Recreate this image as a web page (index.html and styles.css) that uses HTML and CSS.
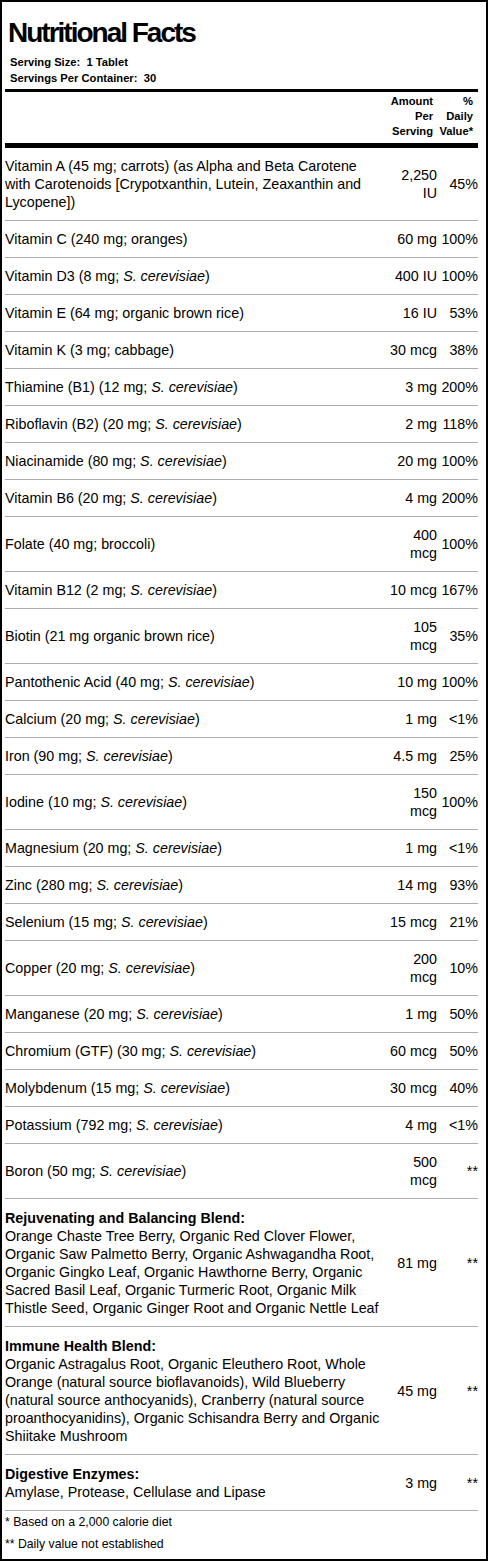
FILE: index.html
```html
<!DOCTYPE html>
<html lang="en">
<head>
<meta charset="utf-8">
<title>Nutritional Facts</title>
<link rel="stylesheet" href="styles.css">
</head>
<body>
<div class="label">
  <h1 class="title">Nutritional Facts</h1>
  <div class="serving">
    <div>Serving Size:&nbsp; 1 Tablet</div>
    <div>Servings Per Container:&nbsp; 30</div>
  </div>
  <div class="rule-thin"></div>
  <div class="colhead">
    <div></div>
    <div class="ch-amt">Amount<br>Per<br>Serving</div>
    <div class="ch-dv">%<br>Daily<br>Value*</div>
  </div>
  <div class="rule-thick"></div>

  <div class="row"><div class="desc">Vitamin A (45 mg; carrots) (as Alpha and Beta Carotene with Carotenoids [Crypotxanthin, Lutein, Zeaxanthin and Lycopene])</div><div class="amt">2,250 IU</div><div class="dv">45%</div></div>
  <div class="row"><div class="desc">Vitamin C (240 mg; oranges)</div><div class="amt">60 mg</div><div class="dv">100%</div></div>
  <div class="row"><div class="desc">Vitamin D3 (8 mg; <i>S. cerevisiae</i>)</div><div class="amt">400 IU</div><div class="dv">100%</div></div>
  <div class="row"><div class="desc">Vitamin E (64 mg; organic brown rice)</div><div class="amt">16 IU</div><div class="dv">53%</div></div>
  <div class="row"><div class="desc">Vitamin K (3 mg; cabbage)</div><div class="amt">30 mcg</div><div class="dv">38%</div></div>
  <div class="row"><div class="desc">Thiamine (B1) (12 mg; <i>S. cerevisiae</i>)</div><div class="amt">3 mg</div><div class="dv">200%</div></div>
  <div class="row"><div class="desc">Riboflavin (B2) (20 mg; <i>S. cerevisiae</i>)</div><div class="amt">2 mg</div><div class="dv">118%</div></div>
  <div class="row"><div class="desc">Niacinamide (80 mg; <i>S. cerevisiae</i>)</div><div class="amt">20 mg</div><div class="dv">100%</div></div>
  <div class="row"><div class="desc">Vitamin B6 (20 mg; <i>S. cerevisiae</i>)</div><div class="amt">4 mg</div><div class="dv">200%</div></div>
  <div class="row"><div class="desc">Folate (40 mg; broccoli)</div><div class="amt">400 mcg</div><div class="dv">100%</div></div>
  <div class="row"><div class="desc">Vitamin B12 (2 mg; <i>S. cerevisiae</i>)</div><div class="amt">10 mcg</div><div class="dv">167%</div></div>
  <div class="row"><div class="desc">Biotin (21 mg organic brown rice)</div><div class="amt">105 mcg</div><div class="dv">35%</div></div>
  <div class="row"><div class="desc">Pantothenic Acid (40 mg; <i>S. cerevisiae</i>)</div><div class="amt">10 mg</div><div class="dv">100%</div></div>
  <div class="row"><div class="desc">Calcium (20 mg; <i>S. cerevisiae</i>)</div><div class="amt">1 mg</div><div class="dv">&lt;1%</div></div>
  <div class="row"><div class="desc">Iron (90 mg; <i>S. cerevisiae</i>)</div><div class="amt">4.5 mg</div><div class="dv">25%</div></div>
  <div class="row"><div class="desc">Iodine (10 mg; <i>S. cerevisiae</i>)</div><div class="amt">150 mcg</div><div class="dv">100%</div></div>
  <div class="row"><div class="desc">Magnesium (20 mg; <i>S. cerevisiae</i>)</div><div class="amt">1 mg</div><div class="dv">&lt;1%</div></div>
  <div class="row"><div class="desc">Zinc (280 mg; <i>S. cerevisiae</i>)</div><div class="amt">14 mg</div><div class="dv">93%</div></div>
  <div class="row"><div class="desc">Selenium (15 mg; <i>S. cerevisiae</i>)</div><div class="amt">15 mcg</div><div class="dv">21%</div></div>
  <div class="row"><div class="desc">Copper (20 mg; <i>S. cerevisiae</i>)</div><div class="amt">200 mcg</div><div class="dv">10%</div></div>
  <div class="row"><div class="desc">Manganese (20 mg; <i>S. cerevisiae</i>)</div><div class="amt">1 mg</div><div class="dv">50%</div></div>
  <div class="row"><div class="desc">Chromium (GTF) (30 mg; <i>S. cerevisiae</i>)</div><div class="amt">60 mcg</div><div class="dv">50%</div></div>
  <div class="row"><div class="desc">Molybdenum (15 mg; <i>S. cerevisiae</i>)</div><div class="amt">30 mcg</div><div class="dv">40%</div></div>
  <div class="row"><div class="desc">Potassium (792 mg; <i>S. cerevisiae</i>)</div><div class="amt">4 mg</div><div class="dv">&lt;1%</div></div>
  <div class="row"><div class="desc">Boron (50 mg; <i>S. cerevisiae</i>)</div><div class="amt">500 mcg</div><div class="dv">**</div></div>

  <div class="row blend"><div class="desc"><b>Rejuvenating and Balancing Blend:</b><br>Orange Chaste Tree Berry, Organic Red Clover Flower, Organic Saw Palmetto Berry, Organic Ashwagandha Root, Organic Gingko Leaf, Organic Hawthorne Berry, Organic Sacred Basil Leaf, Organic Turmeric Root, Organic Milk Thistle Seed, Organic Ginger Root and Organic Nettle Leaf</div><div class="amt">81 mg</div><div class="dv">**</div></div>
  <div class="row blend"><div class="desc"><b>Immune Health Blend:</b><br>Organic Astragalus Root, Organic Eleuthero Root, Whole Orange (natural source bioflavanoids), Wild Blueberry (natural source anthocyanids), Cranberry (natural source proanthocyanidins), Organic Schisandra Berry and Organic Shiitake Mushroom</div><div class="amt">45 mg</div><div class="dv">**</div></div>
  <div class="row blend"><div class="desc"><b>Digestive Enzymes:</b><br>Amylase, Protease, Cellulase and Lipase</div><div class="amt">3 mg</div><div class="dv">**</div></div>

  <div class="note">* Based on a 2,000 calorie diet</div>
  <div class="note">** Daily value not established</div>
</div>
</body>
</html>
```

FILE: styles.css
```css
html, body {
  margin: 0;
  padding: 0;
  background: #fff;
}

body {
  font-family: "Liberation Sans", Arial, Helvetica, sans-serif;
  color: #000;
}

.label {
  box-sizing: border-box;
  width: 488px;
  height: 1561px;
  border: 2px solid #000;
  padding: 15px 8px 4px 3px;
  overflow: hidden;
}

.title {
  margin: 0 0 0 3px;
  font-size: 28px;
  line-height: 32px;
  font-weight: bold;
  letter-spacing: -2px;
}

.serving {
  margin: 6px 0 0 5px;
  font-size: 11.2px;
  line-height: 15.5px;
  font-weight: bold;
}

.rule-thin {
  height: 3px;
  background: #000;
  margin-top: 3px;
}

.rule-thick {
  height: 5px;
  background: #000;
}

.colhead {
  display: grid;
  grid-template-columns: 1fr 50px 41px;
  padding: 2px 0 4px;
  font-size: 11.2px;
  line-height: 15px;
  font-weight: bold;
  text-align: right;
}

.ch-amt {
  padding-right: 4px;
}

.ch-dv {
  padding-right: 5px;
}

.row {
  display: grid;
  grid-template-columns: 1fr 50px 41px;
  align-items: center;
  padding: 9px 0;
  border-bottom: 1px solid #ababab;
  font-size: 14.3px;
  line-height: 18px;
}

.blend {
  padding: 10px 0 9px;
}

.desc {
  padding-right: 2px;
  text-align: left;
}

.amt,
.dv {
  text-align: right;
}

.note {
  padding: 4px 0;
  font-size: 12.25px;
  line-height: 14px;
}
```
